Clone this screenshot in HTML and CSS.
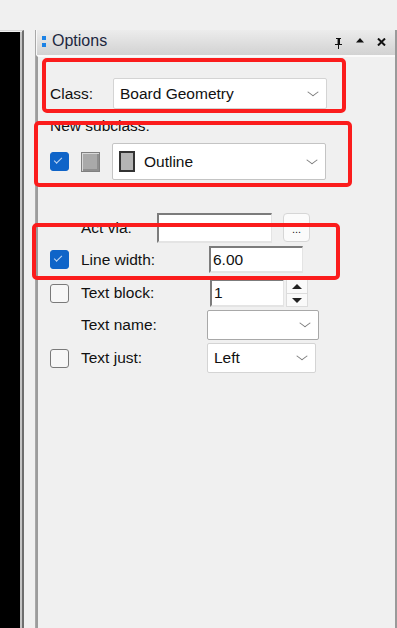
FILE: index.html
```html
<!DOCTYPE html>
<html lang="en">
<head>
    <meta charset="UTF-8">
    <title>Options</title>
    <link rel="stylesheet" href="styles.css">
</head>
<body>

    <div class="top-strip"></div>

    <div class="main">
        <!-- Canvas edge on the left -->
        <div class="canvas-frame">
            <div class="canvas"></div>
        </div>

        <!-- Options panel -->
        <div class="panel">
            <div class="title-bar">
                <span class="grip"><i></i><i></i></span>
                <span class="title">Options</span>
                <span class="title-icons">
                    <svg width="9" height="11" viewBox="0 0 9 11"><path d="M2 0h5v1H6v5h2v1H5v4H4V7H1V6h2V1H2z" fill="#111"/><rect x="3" y="1" width="1" height="5" fill="#888"/></svg>
                    <svg width="8" height="5" viewBox="0 0 8 5"><path d="M4 0L8 4.5H0z" fill="#111"/></svg>
                    <svg width="9" height="8" viewBox="0 0 9 8"><path d="M1 0.5L8 7.5M8 0.5L1 7.5" stroke="#111" stroke-width="2"/></svg>
                </span>
            </div>

            <div class="panel-body">
                <!-- Class -->
                <div class="row row-class">
                    <label class="lbl lbl-class">Class:</label>
                    <div class="combo combo-wide">
                        <span>Board Geometry</span>
                        <span class="chevron"></span>
                    </div>
                </div>

                <!-- Subclass -->
                <div class="sub-label">New subclass:</div>
                <div class="row row-sub">
                    <span class="check checked"></span>
                    <span class="swatch"></span>
                    <div class="combo combo-wide combo-tall">
                        <span class="outline-icon"></span>
                        <span>Outline</span>
                        <span class="chevron"></span>
                    </div>
                </div>

                <!-- Act via -->
                <div class="row row-act">
                    <span class="check-slot"></span>
                    <label class="lbl lbl-act">Act via:</label>
                    <div class="field field-act"></div>
                    <button class="dots">...</button>
                </div>

                <!-- Line width -->
                <div class="row row-line">
                    <span class="check checked"></span>
                    <label class="lbl lbl-line">Line width:</label>
                    <div class="field field-line">6.00</div>
                </div>

                <!-- Text block -->
                <div class="row row-block">
                    <span class="check"></span>
                    <label class="lbl lbl-block">Text block:</label>
                    <div class="field field-block">1</div>
                    <div class="spin">
                        <span class="spin-up"></span>
                        <span class="spin-down"></span>
                    </div>
                </div>

                <!-- Text name -->
                <div class="row row-name">
                    <span class="check-slot"></span>
                    <label class="lbl lbl-name">Text name:</label>
                    <div class="combo combo-name">
                        <span></span>
                        <span class="chevron"></span>
                    </div>
                </div>

                <!-- Text just -->
                <div class="row row-just">
                    <span class="check"></span>
                    <label class="lbl lbl-name">Text just:</label>
                    <div class="combo combo-just">
                        <span>Left</span>
                        <span class="chevron"></span>
                    </div>
                </div>
            </div>
        </div>
    </div>

    <!-- Red annotation boxes drawn over the screenshot -->
    <div class="mark mark-1"></div>
    <div class="mark mark-2"></div>
    <div class="mark mark-3"></div>

</body>
</html>
```

FILE: styles.css
```css
* {
    margin: 0;
    padding: 0;
    box-sizing: border-box;
}
body {
    background-color: #f0f0f0;
    font-family: 'Liberation Sans', Arial, sans-serif;
    font-size: 15.5px;
    color: #111;
    width: 397px;
    height: 628px;
    overflow: hidden;
    position: relative;
}
.top-strip {
    height: 30px;
}
.main {
    display: flex;
    height: 598px;
}

/* left canvas */
.canvas-frame {
    width: 24px;
    padding-top: 1px;
    border-top: 1px solid #d6d6d6;
    border-right: 2px solid #6e6e6e;
}
.canvas {
    height: 100%;
    background: #000;
    border-right: 2px solid #c4c4c4;
}

/* options panel */
.panel {
    margin-left: 11px;
    width: 362px;
    display: flex;
    flex-direction: column;
    border-left: 1px solid #a8a8a8;
    border-right: 2px solid #9a9a9a;
}
.title-bar {
    height: 25px;
    display: flex;
    align-items: center;
    background: linear-gradient(to bottom, #ececec, #d2d2d2);
    border-left: 1px solid #f8f8f8;
    padding-left: 5px;
    padding-bottom: 4px;
}
.grip {
    display: flex;
    flex-direction: column;
    gap: 3px;
    margin-right: 6px;
    margin-top: 1px;
}
.grip i {
    display: block;
    width: 4px;
    height: 4px;
    background: #1b82e6;
}
.title {
    color: #1c2740;
    font-size: 16px;
    flex: 1;
}
.title-icons {
    display: flex;
    align-items: center;
    gap: 13px;
    padding-right: 9px;
    margin-top: 3px;
}
.title-icons svg:first-child {
    margin-top: 3px;
}
.title-icons svg:nth-child(2) {
    margin-top: -4px;
}
.panel-body {
    flex: 1;
    border-top: 2px solid #fafafa;
    border-left: 2px solid #9c9c9c;
    padding-left: 12px;
}

/* rows */
.row {
    display: flex;
    align-items: center;
}
.row-class {
    margin-top: 21px;
    height: 31px;
}
.sub-label {
    margin-top: 8px;
    height: 18px;
    line-height: 18px;
}
.row-sub {
    margin-top: 8px;
    height: 37px;
}
.row-act {
    margin-top: 32px;
    height: 31px;
}
.row-line {
    margin-top: 3px;
    height: 27px;
}
.row-block {
    margin-top: 6px;
    height: 28px;
}
.row-name {
    margin-top: 3px;
    height: 30px;
}
.row-just {
    margin-top: 3px;
    height: 30px;
}

.lbl {
    flex: none;
}
.lbl-class { width: 63px; }
.lbl-act { width: 76px; }
.lbl-line { width: 128px; }
.lbl-block { width: 129px; }
.lbl-name { width: 126px; }

/* checkboxes */
.check, .check-slot {
    width: 19px;
    height: 19px;
    margin-right: 12px;
    flex: none;
}
.check {
    border: 1.5px solid #7a7a7a;
    border-radius: 3px;
    background: #f7f7f7;
    position: relative;
}
.check.checked {
    background: #0f64c8;
    border-color: #0f64c8;
}
.check.checked::after {
    content: "";
    position: absolute;
    left: 4px;
    top: 5px;
    width: 7px;
    height: 3px;
    border-left: 1px solid #c4d8f2;
    border-bottom: 1px solid #c4d8f2;
    transform: rotate(-45deg);
    transform-origin: 3px 3px;
}
.swatch {
    width: 19px;
    height: 20px;
    margin-right: 12px;
    background: #a9a9a9;
    border: 1px solid #808080;
    box-shadow: inset 1px 1px 0 #d8d8d8, inset -2px -2px 0 #8e8e8e;
    flex: none;
}

/* combo boxes */
.combo {
    display: flex;
    align-items: center;
    background: #fff;
    border: 1px solid #d4d4d4;
    border-radius: 2px;
    padding-left: 6px;
    height: 31px;
    flex: none;
}
.combo span:nth-last-child(2) {
    flex: 1;
}
.combo-wide {
    width: 214px;
    height: 31px;
}
.combo-tall {
    height: 37px;
    border-color: #c4c4c4;
}
.combo-name {
    width: 112px;
    height: 30px;
    border-color: #a8a8a8;
}
.combo-just {
    width: 109px;
    height: 30px;
}
.chevron {
    width: 8px;
    height: 8px;
    border-right: 1.2px solid #777;
    border-bottom: 1.2px solid #777;
    transform: scaleY(0.75) rotate(45deg);
    margin-right: 9px;
    margin-top: -4px;
}
.outline-icon {
    width: 16px;
    height: 21px;
    background: #b4b4b4;
    border: 2px solid #333;
    margin-right: 9px;
    flex: none !important;
}

/* text fields */
.field {
    background: #fff;
    border-top: 2px solid #7c7c7c;
    border-left: 2px solid #7c7c7c;
    border-right: 1px solid #e4e4e4;
    border-bottom: 2px solid #e4e4e4;
    padding-left: 2px;
    display: flex;
    align-items: center;
    flex: none;
}
.field-act {
    width: 115px;
    height: 30px;
}
.field-line {
    width: 94px;
    height: 27px;
}
.field-block {
    width: 74px;
    height: 28px;
}
.dots {
    margin-left: 11px;
    width: 27px;
    height: 29px;
    border: 1px solid #d6d6d6;
    border-radius: 4px;
    background: #fbfbfb;
    font-family: 'Liberation Sans', Arial, sans-serif;
    font-size: 11px;
    color: #222;
    padding-top: 2px;
}
.spin {
    margin-left: 2px;
    width: 22px;
    height: 28px;
    display: flex;
    flex-direction: column;
    gap: 1px;
    background: #dcdcdc;
    padding: 1px;
}
.spin span {
    flex: 1;
    background: #fafafa;
    position: relative;
}
.spin span::after {
    content: "";
    position: absolute;
    left: 5px;
    top: 4px;
    border-left: 5px solid transparent;
    border-right: 5px solid transparent;
}
.spin-up::after {
    border-bottom: 5px solid #222;
}
.spin-down::after {
    border-top: 5px solid #222;
}

/* red annotation boxes */
.mark {
    position: absolute;
    border: 4px solid #fb1c1c;
    border-radius: 5px;
}
.mark-1 {
    left: 42px;
    top: 58px;
    width: 304px;
    height: 55px;
}
.mark-2 {
    left: 34px;
    top: 121px;
    width: 318px;
    height: 66px;
}
.mark-3 {
    left: 32px;
    top: 223px;
    width: 308px;
    height: 57px;
}
```
